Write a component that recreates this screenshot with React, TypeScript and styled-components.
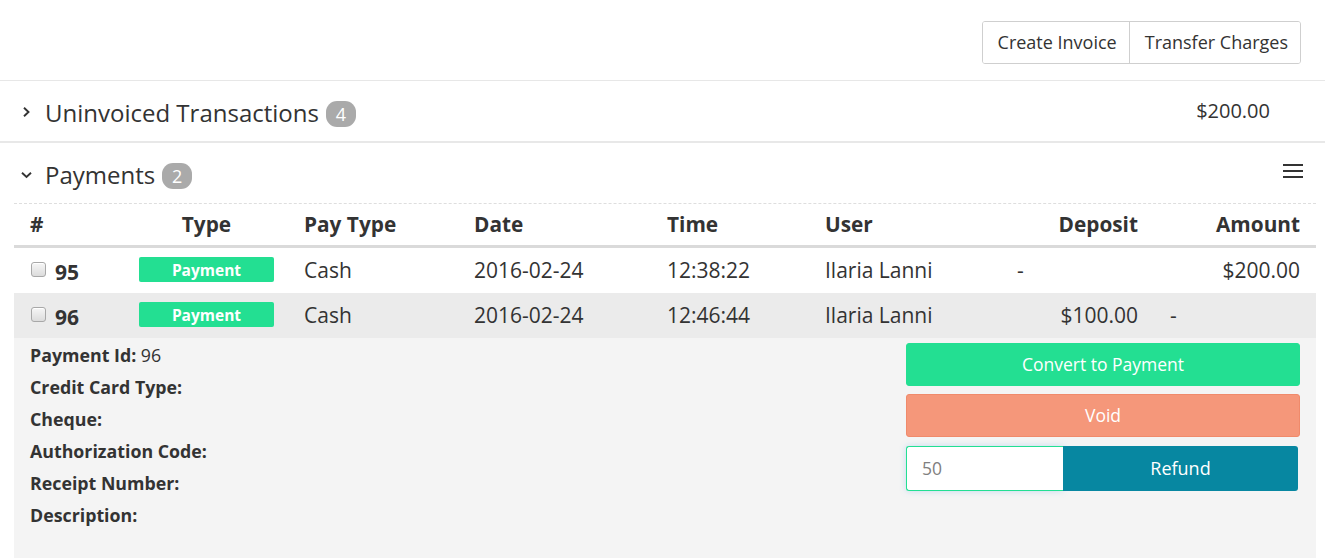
import React from "react";
import styled, { createGlobalStyle } from "styled-components";

const GlobalStyle = createGlobalStyle`
  html, body { margin: 0; padding: 0; background: #fff; }
  body {
    font-family: "Open Sans", "Noto Sans", Arial, sans-serif;
    color: #333;
    -webkit-font-smoothing: antialiased;
  }
  * { box-sizing: border-box; }
`;

const Page = styled.div`
  width: 1325px;
  min-height: 558px;
  overflow: hidden;
`;

const TopBar = styled.div`
  display: flex;
  justify-content: flex-end;
  align-items: flex-start;
  height: 81px;
  padding: 21px 24px 0 0;
  border-bottom: 1px solid #e7e7e7;
`;

const ButtonGroup = styled.div`
  display: flex;
  border: 1px solid #cfcfcf;
  border-radius: 3px;
  overflow: hidden;
`;

const GroupButton = styled.button`
  height: 41px;
  padding: 0 12px 2px 15px;
  background: #fff;
  border: none;
  font-family: inherit;
  font-size: 18px;
  color: #333;
  & + & { border-left: 1px solid #cfcfcf; }
`;

const SectionHeader = styled.div`
  display: flex;
  align-items: center;
  height: 62px;
  padding: 2px 0 0 19px;
  border-bottom: 2px solid #e8e8e8;
`;

const Chevron = styled.span`
  display: inline-flex;
  width: 14px;
  height: 14px;
  align-items: center;
  justify-content: center;
  margin-right: 12px;
`;

const Title = styled.span`
  font-size: 24px;
  color: #333;
`;

const CountBadge = styled.span`
  display: inline-flex;
  align-items: center;
  justify-content: center;
  min-width: 30px;
  height: 26px;
  padding: 0 9px;
  margin-left: 7px;
  margin-top: 3px;
  border-radius: 11px;
  background: #aaa;
  color: #fff;
  font-size: 18px;
`;

const HeaderAmount = styled.span`
  margin-left: auto;
  margin-right: 55px;
  margin-top: -3px;
  font-size: 20px;
`;

const PaymentsBlock = styled.div`
  padding: 0 9px 0 14px;
`;

const PaymentsHeader = styled.div`
  display: flex;
  align-items: center;
  height: 60px;
  padding: 3px 0 0 5px;
`;

const MenuIcon = styled.span`
  margin-left: auto;
  margin-right: 13px;
  margin-top: -6px;
  display: inline-flex;
`;

const cols = "117px 165px 170px 193px 158px 192px 145px 162px";

const HeadRow = styled.div`
  display: grid;
  grid-template-columns: ${cols};
  align-items: center;
  height: 45px;
  padding-bottom: 2px;
  border-top: 1px dashed #dedede;
  border-bottom: 3px solid #dadada;
  font-weight: 700;
  font-size: 20.8px;
  color: #333;
`;

const Row = styled.div<{ $shade?: boolean }>`
  display: grid;
  grid-template-columns: ${cols};
  align-items: center;
  height: 45px;
  padding-bottom: 2px;
  background: ${(p) => (p.$shade ? "#ebebeb" : "#fff")};
  font-size: 21px;
  color: #333;
`;

const Cell = styled.div<{ $align?: "left" | "right" | "center"; $pl?: number; $pr?: number }>`
  text-align: ${(p) => p.$align || "left"};
  padding-left: ${(p) => (p.$pl ?? 8)}px;
  padding-right: ${(p) => (p.$pr ?? 8)}px;
  white-space: nowrap;
`;

const IdCell = styled.div`
  display: flex;
  align-items: center;
  padding-left: 17px;
  gap: 9px;
`;

const Check = styled.span`
  width: 15px;
  height: 15px;
  border: 1px solid #a8a8a8;
  border-radius: 3px;
  background: linear-gradient(#f6f6f6, #dcdcdc);
  box-shadow: inset 0 1px 0 #fff;
`;

const IdNum = styled.span`
  font-weight: 700;
  font-size: 21px;
  margin-top: 4px;
`;

const TypeBadge = styled.span`
  display: flex;
  align-items: center;
  justify-content: center;
  width: 135px;
  height: 25px;
  border-radius: 2px;
  background: #23df92;
  color: #fff;
  font-weight: 700;
  font-size: 15.5px;
  margin-top: 0;
`;

const TypeHead = styled.div`
  width: 135px;
  text-align: center;
`;

const Detail = styled.div`
  display: flex;
  justify-content: space-between;
  min-height: 221px;
  background: #f4f4f4;
  padding: 1px 16px 20px 16px;
`;

const InfoList = styled.div`
  display: flex;
  flex-direction: column;
`;

const InfoLine = styled.div`
  font-size: 17.8px;
  line-height: 32px;
  color: #333;
`;

const InfoLabel = styled.b`
  font-weight: 700;
`;

const Actions = styled.div`
  width: 394px;
  display: flex;
  flex-direction: column;
  gap: 8px;
  padding-top: 4px;
`;

const ActionButton = styled.button<{ $bg: string; $border: string }>`
  height: 43px;
  width: 100%;
  padding-bottom: 2px;
  border-radius: 3px;
  border: 1px solid ${(p) => p.$border};
  background: ${(p) => p.$bg};
  color: #fff;
  font-family: inherit;
  font-size: 17.5px;
`;

const RefundGroup = styled.div`
  display: flex;
  height: 45px;
  margin-top: 1px;
  width: 392px;
`;

const AmountInput = styled.input`
  width: 157px;
  height: 45px;
  border: 1px solid #23df92;
  border-right: none;
  border-radius: 3px 0 0 3px;
  padding: 0 15px 2px;
  font-family: inherit;
  font-size: 17.5px;
  color: #808080;
  background: #fff;
  box-shadow: 0 0 6px rgba(102, 175, 233, 0.35);
  outline: none;
`;

const RefundButton = styled.button`
  flex: 1;
  height: 45px;
  padding-bottom: 2px;
  border: none;
  border-radius: 0 3px 3px 0;
  background: #0787a1;
  color: #fff;
  font-family: inherit;
  font-size: 18px;
`;

const ChevronRight = () => (
  <svg width="10" height="12" viewBox="0 0 10 12">
    <polyline points="3,1.8 7.5,6 3,10.2" fill="none" stroke="#333" strokeWidth="1.9" />
  </svg>
);

const ChevronDown = () => (
  <svg width="13" height="8" viewBox="0 0 13 8">
    <polyline points="2,1.8 6.5,6 11,1.8" fill="none" stroke="#333" strokeWidth="1.9" />
  </svg>
);

const Hamburger = () => (
  <svg width="20" height="15" viewBox="0 0 20 15">
    <rect x="0" y="0" width="20" height="2" fill="#333" />
    <rect x="0" y="6" width="20" height="2" fill="#333" />
    <rect x="0" y="12" width="20" height="2" fill="#333" />
  </svg>
);

type Payment = {
  id: number;
  payType: string;
  date: string;
  time: string;
  user: string;
  deposit: string;
  amount: string;
};

const payments: Payment[] = [
  { id: 95, payType: "Cash", date: "2016-02-24", time: "12:38:22", user: "Ilaria Lanni", deposit: "-", amount: "$200.00" },
  { id: 96, payType: "Cash", date: "2016-02-24", time: "12:46:44", user: "Ilaria Lanni", deposit: "$100.00", amount: "-" },
];

const details = [
  { label: "Payment Id:", value: "96" },
  { label: "Credit Card Type:", value: "" },
  { label: "Cheque:", value: "" },
  { label: "Authorization Code:", value: "" },
  { label: "Receipt Number:", value: "" },
  { label: "Description:", value: "" },
];

export default function App() {
  return (
    <Page>
      <GlobalStyle />
      <TopBar>
        <ButtonGroup>
          <GroupButton>Create Invoice</GroupButton>
          <GroupButton>Transfer Charges</GroupButton>
        </ButtonGroup>
      </TopBar>

      <SectionHeader>
        <Chevron>
          <ChevronRight />
        </Chevron>
        <Title>Uninvoiced Transactions</Title>
        <CountBadge>4</CountBadge>
        <HeaderAmount>$200.00</HeaderAmount>
      </SectionHeader>

      <PaymentsBlock>
        <PaymentsHeader>
          <Chevron>
            <ChevronDown />
          </Chevron>
          <Title>Payments</Title>
          <CountBadge>2</CountBadge>
          <MenuIcon>
            <Hamburger />
          </MenuIcon>
        </PaymentsHeader>

        <HeadRow>
          <Cell $pl={16}>#</Cell>
          <Cell>
            <TypeHead>Type</TypeHead>
          </Cell>
          <Cell>Pay Type</Cell>
          <Cell>Date</Cell>
          <Cell>Time</Cell>
          <Cell>User</Cell>
          <Cell $align="right" $pr={16}>Deposit</Cell>
          <Cell $align="right" $pl={16} $pr={16}>Amount</Cell>
        </HeadRow>

        {payments.map((p, i) => (
          <Row key={p.id} $shade={i === 1}>
            <IdCell>
              <Check />
              <IdNum>{p.id}</IdNum>
            </IdCell>
            <Cell>
              <TypeBadge>Payment</TypeBadge>
            </Cell>
            <Cell>{p.payType}</Cell>
            <Cell>{p.date}</Cell>
            <Cell>{p.time}</Cell>
            <Cell>{p.user}</Cell>
            <Cell $align={p.deposit === "-" ? "left" : "right"} $pr={16}>{p.deposit}</Cell>
            <Cell $align={p.amount === "-" ? "left" : "right"} $pl={16} $pr={16}>{p.amount}</Cell>
          </Row>
        ))}

        <Detail>
          <InfoList>
            {details.map((d) => (
              <InfoLine key={d.label}>
                <InfoLabel>{d.label}</InfoLabel>
                {d.value ? ` ${d.value}` : ""}
              </InfoLine>
            ))}
          </InfoList>
          <Actions>
            <ActionButton $bg="#23df92" $border="#23df92">Convert to Payment</ActionButton>
            <ActionButton $bg="#f5977a" $border="#f08a6b">Void</ActionButton>
            <RefundGroup>
              <AmountInput defaultValue="50" />
              <RefundButton>Refund</RefundButton>
            </RefundGroup>
          </Actions>
        </Detail>
      </PaymentsBlock>
    </Page>
  );
}
